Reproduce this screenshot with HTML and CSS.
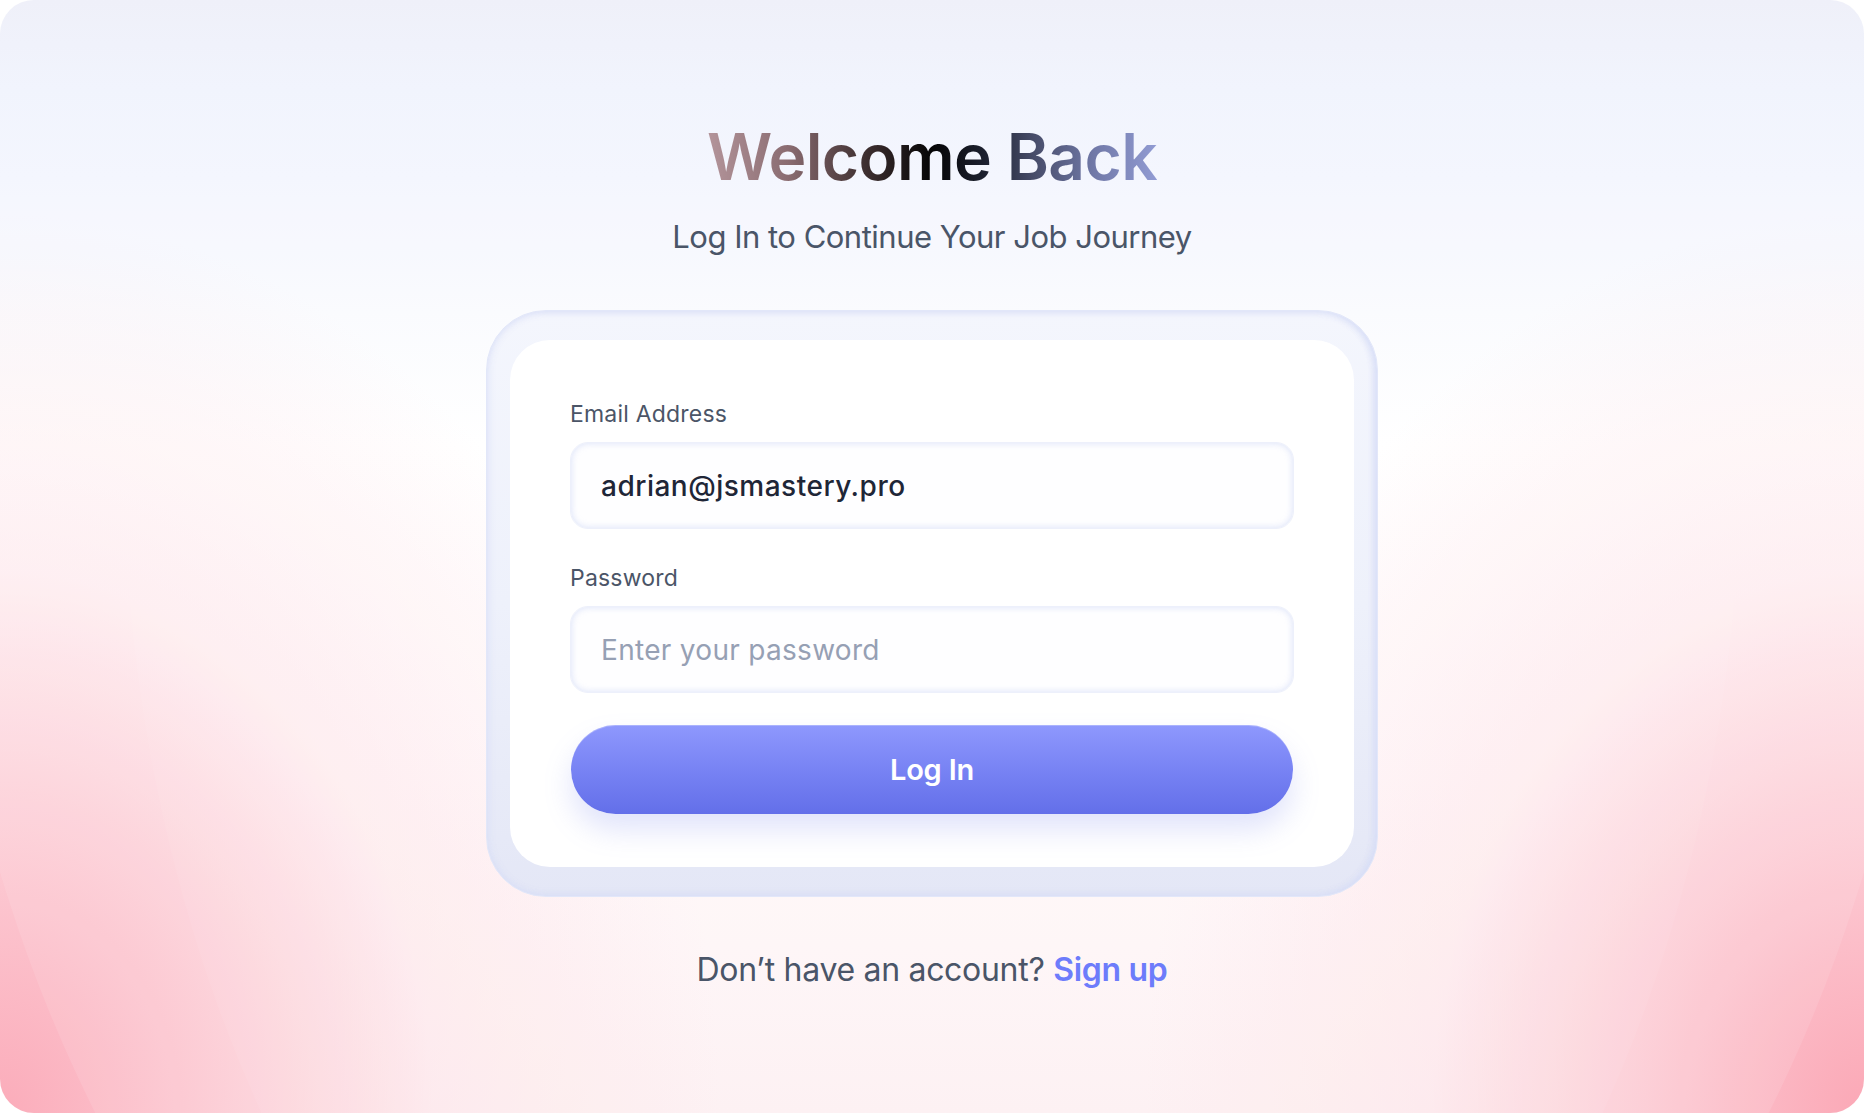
FILE: index.html
```html
<!DOCTYPE html>
<html lang="en">
<head>
<meta charset="utf-8">
<title>Welcome Back</title>
<link rel="stylesheet" href="styles.css">
</head>
<body>
<main class="page">
  <div class="arc arc-outer"></div>
  <div class="arc arc-inner"></div>
  <h1 class="title">Welcome Back</h1>
  <p class="subtitle">Log In to Continue Your Job Journey</p>
  <div class="card-frame">
    <form class="card">
      <div class="field">
        <label class="label" for="email">Email Address</label>
        <input class="input" id="email" type="email" value="adrian@jsmastery.pro">
      </div>
      <div class="field">
        <label class="label" for="password">Password</label>
        <input class="input" id="password" type="password" placeholder="Enter your password">
      </div>
      <button class="btn" type="button">Log In</button>
    </form>
  </div>
  <p class="footer">Don’t have an account? <a class="signup" href="#">Sign up</a></p>
</main>
</body>
</html>
```

FILE: styles.css
```css
* { box-sizing: border-box; }
html, body { margin: 0; padding: 0; background: #ffffff; }
body { font-family: Inter, "Noto Sans", "Liberation Sans", sans-serif; }

.page {
  position: relative;
  width: 1864px;
  height: 1113px;
  border-radius: 34px;
  overflow: hidden;
  display: flex;
  flex-direction: column;
  align-items: center;
  padding-top: 118px;
  background:
    radial-gradient(ellipse 720px 900px at 0% 100%, rgba(251,172,186,1) 0%, rgba(252,192,203,0.8) 30%, rgba(253,220,226,0.45) 60%, rgba(255,240,243,0) 100%),
    radial-gradient(ellipse 720px 900px at 100% 100%, rgba(251,168,182,1) 0%, rgba(252,192,203,0.8) 30%, rgba(253,220,226,0.45) 60%, rgba(255,240,243,0) 100%),
    linear-gradient(180deg, #eeeff9 0%, #f0f3fd 8%, #f3f5fe 16%, #fafbfe 28%, #ffffff 40%, #fffafb 70%, #fdf0f2 100%);
}

.arc {
  position: absolute;
  border-radius: 50%;
  pointer-events: none;
}
.arc-outer {
  width: 2000px;
  height: 2604px;
  left: -68px;
  top: -902px;
  background: rgba(255,255,255,0.10);
}
.arc-inner {
  width: 1620px;
  height: 2400px;
  left: 122px;
  top: -760px;
  background: rgba(255,255,255,0.06);
}

.title {
  position: relative;
  margin: 0;
  font-size: 64px;
  line-height: 77px;
  font-weight: 600;
  letter-spacing: -0.6px;
  background: linear-gradient(90deg, #b4959b 0%, #8a6c71 18%, #3a2c2d 36%, #050506 50%, #1d2130 62%, #454a66 72%, #7179a8 86%, #919bd3 100%);
  -webkit-background-clip: text;
  background-clip: text;
  color: transparent;
}

.subtitle {
  position: relative;
  margin: 23px 0 0;
  font-size: 31px;
  line-height: 38px;
  font-weight: 400;
  color: #4a5568;
  letter-spacing: -0.5px;
}

.card-frame {
  position: relative;
  margin-top: 54px;
  width: 892px;
  padding: 29px 23px;
  border: 1px solid #e2e7f9;
  border-radius: 60px;
  background: linear-gradient(180deg, #f4f6fd 0%, #eef1fb 50%, #e4e7f6 100%);
  box-shadow: inset 0 0 8px rgba(214,221,247,0.9), inset -3px 0 6px rgba(214,220,246,0.8);
}

.card {
  margin: 0;
  background: #ffffff;
  border-radius: 40px;
  padding: 60px 60px 53px;
  display: flex;
  flex-direction: column;
}

.field {
  display: flex;
  flex-direction: column;
  gap: 14px;
  margin-bottom: 35px;
}
.field + .field { margin-bottom: 32px; }

.label {
  font-size: 23px;
  line-height: 28px;
  color: #4b5567;
  font-weight: 400;
  letter-spacing: 0.2px;
}

.input {
  width: 100%;
  height: 87px;
  border: 1px solid #edf0fb;
  border-radius: 18px;
  background: #fefeff;
  box-shadow: inset 0 0 7px rgba(206,215,246,0.75);
  padding: 0 30px;
  font-family: inherit;
  font-size: 28px;
  font-weight: 500;
  letter-spacing: 0.5px;
  color: #1f2637;
  outline: none;
}
.input::placeholder {
  color: #96a0b4;
  font-weight: 400;
  letter-spacing: 0.3px;
}

.btn {
  height: 89px;
  margin: 0 1px;
  border: none;
  border-radius: 999px;
  background: linear-gradient(180deg, #8e98fd 0%, #7a85f5 45%, #636fe9 100%);
  box-shadow: 0 16px 28px rgba(120,132,238,0.22), inset 0 1px 0 rgba(255,255,255,0.25);
  color: #ffffff;
  font-family: inherit;
  font-size: 29px;
  font-weight: 600;
  letter-spacing: -0.2px;
  cursor: pointer;
}

.footer {
  position: relative;
  margin: 54px 0 0;
  font-size: 32px;
  line-height: 38px;
  color: #4a5568;
  letter-spacing: -0.3px;
}
.signup {
  color: #6d7cfb;
  font-weight: 600;
  text-decoration: none;
}
```
